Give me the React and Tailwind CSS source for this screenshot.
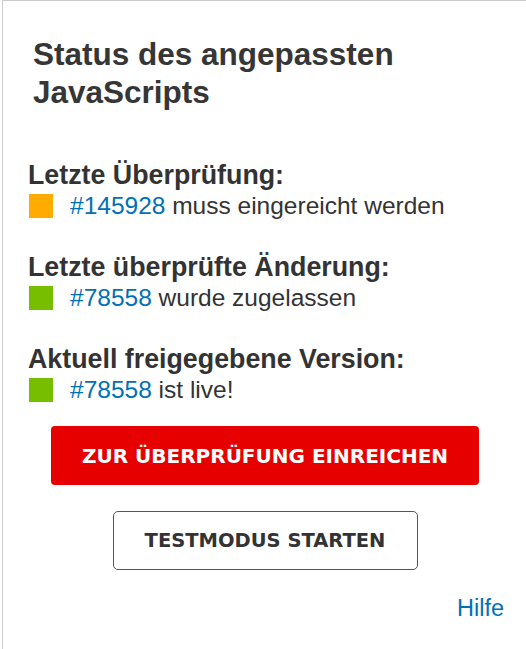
import React from 'react';

const sections = [
  { label: 'Letzte Überprüfung:', color: 'bg-[#ffab00]', id: '#145928', text: 'muss eingereicht werden' },
  { label: 'Letzte überprüfte Änderung:', color: 'bg-[#78be00]', id: '#78558', text: 'wurde zugelassen' },
  { label: 'Aktuell freigegebene Version:', color: 'bg-[#78be00]', id: '#78558', text: 'ist live!' },
];

const StatusSection = ({ label, color, id, text }) => (
  <div>
    <h3 className="text-[26.8px] leading-[30px] font-bold text-[#333]">{label}</h3>
    <div className="mt-[2px] flex items-center gap-[17px]">
      <span className={`ml-[1px] h-6 w-6 shrink-0 ${color}`} />
      <p className="text-[24.5px] leading-[28px] text-[#333]">
        <a href="#" className="text-[#0070b8]">{id}</a> {text}
      </p>
    </div>
  </div>
);

const App = () => {
  return (
    <div className="min-h-[649px] bg-white font-['Liberation_Sans',Arial,sans-serif]">
      <div className="ml-[2px] min-h-[649px] border-l border-t border-[#cccccc] pl-[25px] pr-[22px] pt-[34px]">
        <h2 className="pl-[5px] text-[31.5px] leading-[38px] font-bold text-[#363636]">
          Status des angepassten
          <br />
          JavaScripts
        </h2>

        <div className="mt-[49px] flex flex-col gap-[32px]">
          {sections.map((s) => (
            <StatusSection key={s.label} {...s} />
          ))}
        </div>

        <div className="mt-[22px] flex flex-col items-center -ml-[25px] -mr-[22px] gap-[26px]">
          <button className="ml-[1px] h-[59px] w-[428px] rounded-[4px] bg-[#e60000] font-['DejaVu_Sans',sans-serif] text-[20px] font-bold text-white">
            ZUR ÜBERPRÜFUNG EINREICHEN
          </button>
          <button className="ml-[1px] h-[59px] w-[305px] rounded-[5px] border border-[#555] bg-white font-['DejaVu_Sans',sans-serif] text-[19.5px] font-bold text-[#333]">
            TESTMODUS STARTEN
          </button>
        </div>

        <div className="mt-[24px] flex justify-end">
          <a href="#" className="text-[23.5px] leading-[28px] text-[#0070b8]">
            Hilfe
          </a>
        </div>
      </div>
    </div>
  );
};

export default App;
